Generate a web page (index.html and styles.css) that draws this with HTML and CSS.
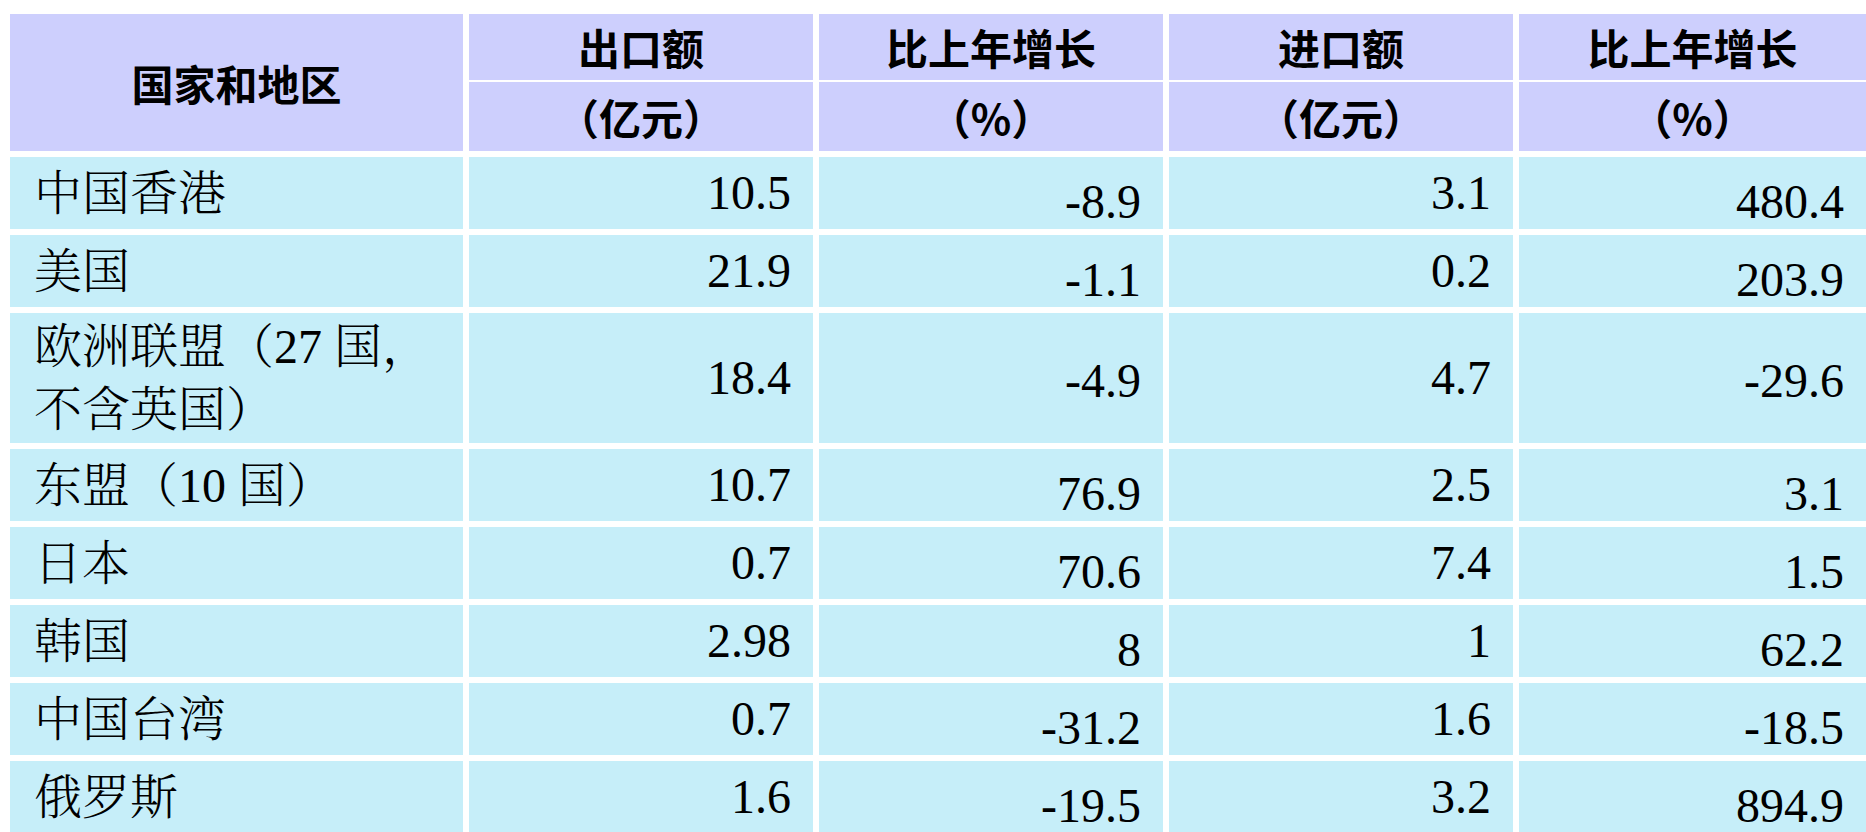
FILE: index.html
```html
<!DOCTYPE html>
<html lang="zh-CN">
<head>
<meta charset="utf-8">
<title>主要国家和地区进出口</title>
<link rel="stylesheet" href="styles.css">
</head>
<body>
<div class="sheet">
  <div class="head">
    <div class="hcell region">国家和地区</div>
    <div class="hcell">出口额</div>
    <div class="hcell">比上年增长</div>
    <div class="hcell">进口额</div>
    <div class="hcell">比上年增长</div>
    <div class="hcell">（亿元）</div>
    <div class="hcell">（%）</div>
    <div class="hcell">（亿元）</div>
    <div class="hcell">（%）</div>
  </div>
  <div class="rows">
    <div class="row">
      <div class="cell name">中国香港</div>
      <div class="cell num">10.5</div>
      <div class="cell num low">-8.9</div>
      <div class="cell num">3.1</div>
      <div class="cell num low">480.4</div>
    </div>
    <div class="row">
      <div class="cell name">美国</div>
      <div class="cell num">21.9</div>
      <div class="cell num low">-1.1</div>
      <div class="cell num">0.2</div>
      <div class="cell num low">203.9</div>
    </div>
    <div class="row tall">
      <div class="cell name">欧洲联盟（27 国，<br>不含英国）</div>
      <div class="cell num">18.4</div>
      <div class="cell num low">-4.9</div>
      <div class="cell num">4.7</div>
      <div class="cell num low">-29.6</div>
    </div>
    <div class="row">
      <div class="cell name">东盟（10 国）</div>
      <div class="cell num">10.7</div>
      <div class="cell num low">76.9</div>
      <div class="cell num">2.5</div>
      <div class="cell num low">3.1</div>
    </div>
    <div class="row">
      <div class="cell name">日本</div>
      <div class="cell num">0.7</div>
      <div class="cell num low">70.6</div>
      <div class="cell num">7.4</div>
      <div class="cell num low">1.5</div>
    </div>
    <div class="row">
      <div class="cell name">韩国</div>
      <div class="cell num">2.98</div>
      <div class="cell num low">8</div>
      <div class="cell num">1</div>
      <div class="cell num low">62.2</div>
    </div>
    <div class="row">
      <div class="cell name">中国台湾</div>
      <div class="cell num">0.7</div>
      <div class="cell num low">-31.2</div>
      <div class="cell num">1.6</div>
      <div class="cell num low">-18.5</div>
    </div>
    <div class="row">
      <div class="cell name">俄罗斯</div>
      <div class="cell num">1.6</div>
      <div class="cell num low">-19.5</div>
      <div class="cell num">3.2</div>
      <div class="cell num low">894.9</div>
    </div>
  </div>
</div>
</body>
</html>
```
FILE: styles.css
```css
html, body {
  margin: 0;
  padding: 0;
  background: #ffffff;
  overflow: hidden;
}

.sheet {
  padding: 14px 0 0 10px;
  font-family: "Liberation Serif", "Noto Serif CJK SC", "Noto Sans CJK SC", serif;
  color: #000000;
}

.head {
  display: grid;
  grid-template-columns: 453px 344px 344px 344px 347px;
  grid-template-rows: 66px 69px;
  column-gap: 6px;
  row-gap: 2px;
  margin-bottom: 6px;
}

.hcell {
  background: #cdcffd;
  display: flex;
  align-items: center;
  justify-content: center;
  font-family: "Noto Sans CJK SC", sans-serif;
  font-weight: 700;
  font-size: 42px;
  line-height: 1;
}

.region {
  grid-row: span 2;
}

.rows {
  display: flex;
  flex-direction: column;
  gap: 6px;
}

.row {
  display: grid;
  grid-template-columns: 453px 344px 344px 344px 347px;
  grid-template-rows: minmax(0, 1fr);
  column-gap: 6px;
  height: 72px;
  flex-shrink: 0;
}

.row.tall {
  height: 130px;
}

.cell {
  background: #c6eef9;
  display: flex;
  align-items: center;
  box-sizing: border-box;
  font-size: 48px;
  line-height: 63px;
  overflow: hidden;
}

.name {
  padding-left: 24px;
  font-weight: 300;
}

.num {
  justify-content: flex-end;
  padding-right: 22px;
  line-height: 50px;
}

.low {
  padding-top: 17px;
}

.tall .low {
  padding-top: 6px;
}
```
